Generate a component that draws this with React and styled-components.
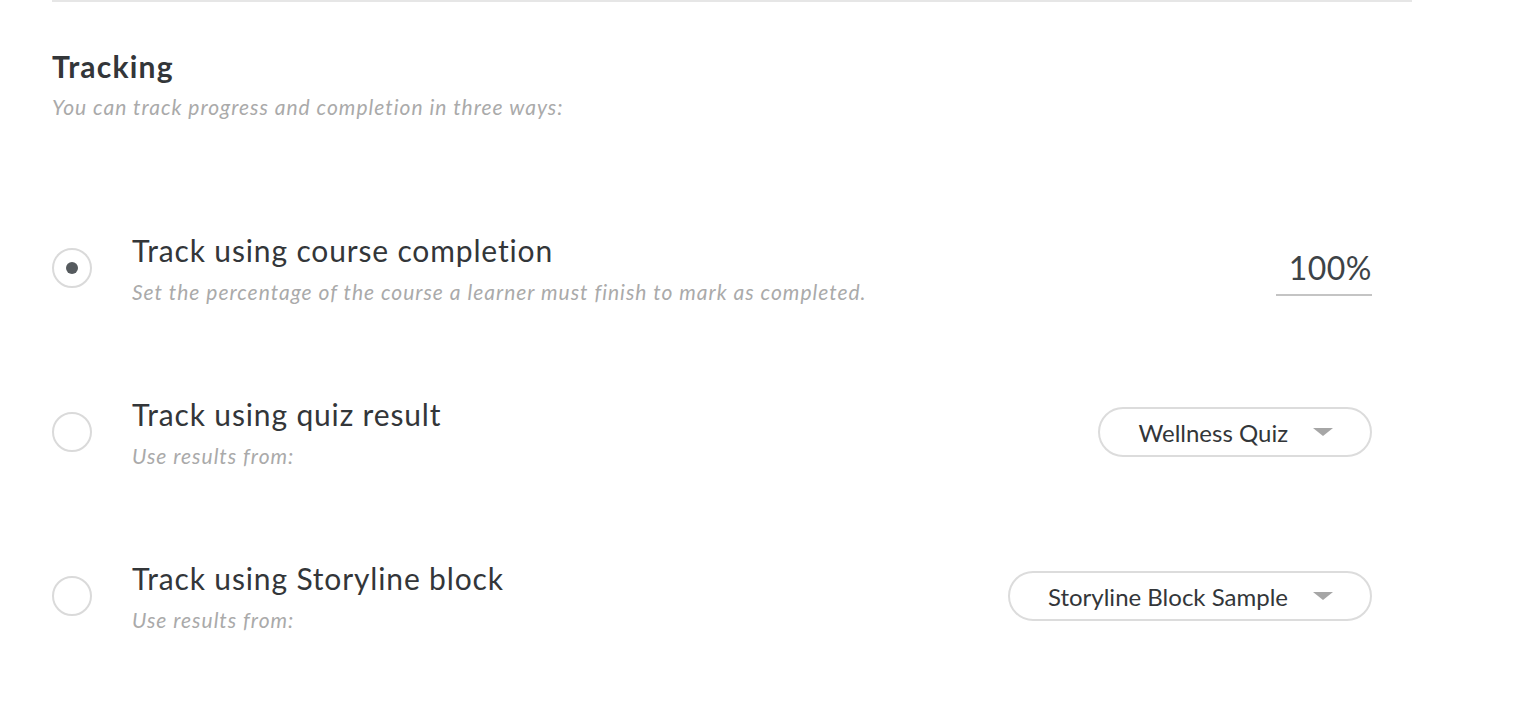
import styled, { createGlobalStyle } from "styled-components";

const GlobalStyle = createGlobalStyle`
    body {
        margin: 0;
        background: #ffffff;
        font-family: Lato, "Noto Sans", sans-serif;
        color: #333639;
    }
`;

const options = [
    {
        key: "completion",
        title: "Track using course completion",
        description: "Set the percentage of the course a learner must finish to mark as completed.",
        checked: true,
        control: "percent",
        value: "100%",
    },
    {
        key: "quiz",
        title: "Track using quiz result",
        description: "Use results from:",
        control: "select",
        value: "Wellness Quiz",
    },
    {
        key: "storyline",
        title: "Track using Storyline block",
        description: "Use results from:",
        control: "select",
        value: "Storyline Block Sample",
    },
];

const Caret = () => (
    <svg width="20" height="8" viewBox="0 0 20 8">
        <path d="M0 0 L20 0 L10 8 Z" fill="#a6a6a6" />
    </svg>
);

const App = () => {
    return (
        <>
            <GlobalStyle />
            <Section>
                <Header>
                    <h2>Tracking</h2>
                    <p>You can track progress and completion in three ways:</p>
                </Header>
                <OptionList>
                    {options.map((option) => (
                        <OptionRow key={option.key}>
                            <Radio checked={option.checked} />
                            <OptionText>
                                <div className="title">{option.title}</div>
                                <div className="description">{option.description}</div>
                            </OptionText>
                            {option.control === "percent" ? (
                                <PercentField>{option.value}</PercentField>
                            ) : (
                                <Select>
                                    <span>{option.value}</span>
                                    <Caret />
                                </Select>
                            )}
                        </OptionRow>
                    ))}
                </OptionList>
            </Section>
        </>
    );
};

export default App;

const Section = styled.div`
    width: 1360px;
    margin-left: 52px;
    border-top: 2px solid #e6e6e6;
    height: 724px;
`;

const Header = styled.div`
    padding-top: 46px;

    h2 {
        margin: 0;
        font-size: 30px;
        font-weight: 700;
        line-height: 36px;
        letter-spacing: 1.2px;
        color: #333639;
    }

    p {
        margin: 0;
        margin-top: 10px;
        font-size: 21px;
        font-style: italic;
        line-height: 26px;
        letter-spacing: 1px;
        color: #aaaaaa;
    }
`;

const OptionList = styled.div`
    margin-top: 118px;
    display: flex;
    flex-direction: column;
    gap: 104px;
`;

const OptionRow = styled.div`
    display: flex;
    align-items: center;
    height: 60px;
    padding-right: 40px;
`;

const Radio = styled.div`
    width: 36px;
    height: 36px;
    border: 2px solid #dadada;
    border-radius: 50%;
    flex-shrink: 0;
    display: flex;
    align-items: center;
    justify-content: center;

    &::after {
        content: "";
        display: ${(props) => (props.checked ? "block" : "none")};
        width: 12px;
        height: 12px;
        border-radius: 50%;
        background: #555a5e;
    }
`;

const OptionText = styled.div`
    flex: 1;
    padding-left: 40px;
    padding-top: 1px;

    .title {
        font-size: 30px;
        line-height: 36px;
        letter-spacing: 0.85px;
        color: #333639;
    }

    .description {
        font-size: 21px;
        font-style: italic;
        line-height: 26px;
        letter-spacing: 1px;
        color: #aaaaaa;
        margin-top: 11px;
    }
`;

const PercentField = styled.div`
    width: 96px;
    text-align: right;
    font-size: 32px;
    line-height: 36px;
    letter-spacing: 0.5px;
    color: #3d4347;
    border-bottom: 2px solid #c4c4c4;
    padding-bottom: 8px;
    margin-top: 10px;
`;

const Select = styled.div`
    box-sizing: border-box;
    height: 50px;
    border: 2px solid #dcdcdc;
    border-radius: 25px;
    display: flex;
    align-items: center;
    gap: 25px;
    padding: 0 37px 0 38px;
    font-size: 24px;
    color: #333639;
`;
